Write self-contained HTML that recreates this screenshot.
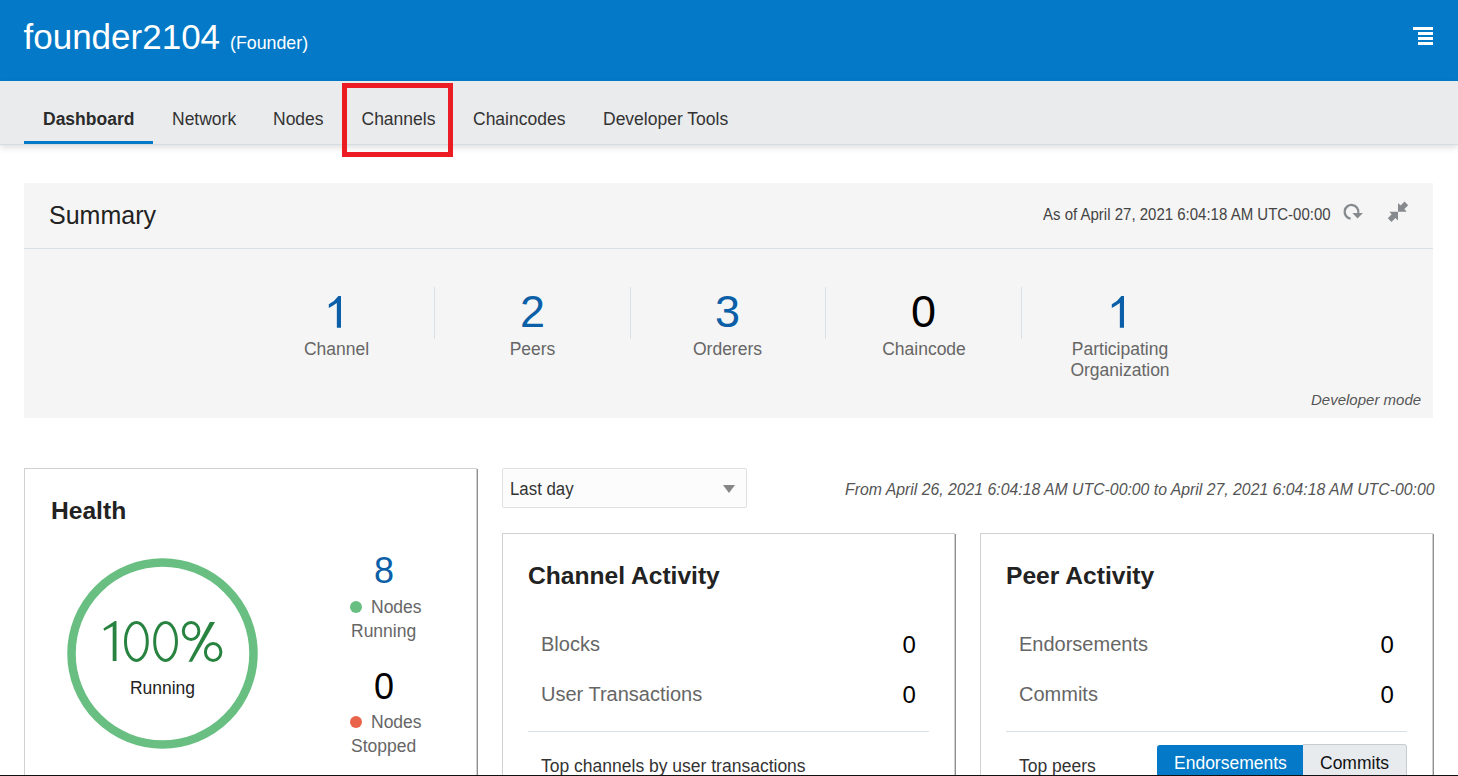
<!DOCTYPE html>
<html>
<head>
<meta charset="utf-8">
<style>
html,body{margin:0;padding:0;}
body{width:1458px;height:776px;overflow:hidden;position:relative;background:#fff;font-family:"Liberation Sans",sans-serif;color:#333;}
.a{position:absolute;white-space:nowrap;}
#hdr{left:0;top:0;width:1458px;height:81px;background:#0379c7;}
#nav{left:0;top:81px;width:1458px;height:63px;background:#eaebed;border-bottom:1px solid #d5dde4;box-shadow:0 3px 6px rgba(0,0,0,0.12);}
.nv{font-size:17.5px;color:#333;top:109px;}
#sum{left:24px;top:183px;width:1409px;height:235px;background:#f5f5f5;}
#sumsep{left:24px;top:248px;width:1409px;height:1px;background:#d9e1e8;}
.col{top:287px;height:52px;width:1px;background:#d9e1e8;}
.num{font-size:45px;color:#0a5fa8;text-align:center;width:195px;}
.lbl{font-size:17.5px;color:#666;text-align:center;width:195px;line-height:21px;}
.card{background:#fff;border:1px solid #d0d0d0;box-shadow:1px 1px 0 #8f8f8f;}
.ct{font-size:24.6px;font-weight:bold;color:#222;}
.rl{font-size:20px;color:#666;}
.rv{font-size:24px;color:#000;}
</style>
</head>
<body>
<!-- header -->
<div id="hdr" class="a"></div>
<div class="a" style="left:23.5px;top:17px;font-size:35px;color:#fff;">founder2104</div>
<div class="a" style="left:230px;top:32.5px;font-size:17.8px;color:#fff;">(Founder)</div>
<svg class="a" style="left:1410px;top:24px" width="26" height="24" viewBox="0 0 26 24">
<rect x="3" y="3" width="20" height="3" fill="#fff"/>
<rect x="8" y="8" width="15" height="3" fill="#fff"/>
<rect x="8" y="13" width="15" height="3" fill="#fff"/>
<rect x="8" y="18" width="15" height="3" fill="#fff"/>
</svg>

<!-- nav -->
<div id="nav" class="a"></div>
<div class="a nv" style="left:43px;font-weight:bold;color:#2b2b2b;">Dashboard</div>
<div class="a" style="left:24px;top:141px;width:129px;height:3px;background:#0379c7;"></div>
<div class="a nv" style="left:172px;">Network</div>
<div class="a nv" style="left:273px;">Nodes</div>
<div class="a nv" style="left:361.5px;">Channels</div>
<div class="a nv" style="left:473px;">Chaincodes</div>
<div class="a nv" style="left:603px;">Developer Tools</div>
<div class="a" style="left:342px;top:83px;width:101px;height:64px;border:5px solid #ec1c24;"></div>

<!-- summary -->
<div id="sum" class="a"></div>
<div id="sumsep" class="a"></div>
<div class="a" style="left:49px;top:201px;font-size:25px;color:#222;">Summary</div>
<div class="a" style="left:1043px;top:206px;font-size:15.8px;color:#444;transform:scaleX(0.9495);transform-origin:0 0;">As of April 27, 2021 6:04:18 AM UTC-00:00</div>
<svg class="a" style="left:1340px;top:200px" width="26" height="24" viewBox="0 0 26 24">
<path d="M10.6 18.6 A6.85 6.85 0 1 1 18.25 13" fill="none" stroke="#868a8e" stroke-width="2.3"/>
<path d="M12.4 13 L22.9 13 L17.5 18.6 Z" fill="#868a8e"/>
</svg>
<svg class="a" style="left:1384px;top:198px" width="28" height="28" viewBox="0 0 28 28">
<path d="M14 13.7 L14 5 L16.6 7.4 L20.5 3.5 L24.2 7.2 L20.3 11.1 L22.7 13.7 Z" fill="#868a8e"/>
<path d="M14 13.7 L14 22.4 L11.4 20 L7.5 23.9 L3.8 20.2 L7.7 16.3 L5.3 13.7 Z" fill="#868a8e"/>
</svg>

<div class="a col" style="left:434px;"></div>
<div class="a col" style="left:630px;"></div>
<div class="a col" style="left:825px;"></div>
<div class="a col" style="left:1021px;"></div>

<svg class="a" style="left:326px;top:294px" width="18" height="36" viewBox="0 0 18 36"><path d="M12.4 2 L15 2 L15 33.7 L10.85 33.7 L10.85 9 Q7 11.8 2.8 13.9 L2.8 10.2 Q9 7 12.4 2 Z" fill="#0a5fa8"/></svg>
<div class="a lbl" style="left:239px;top:339px;">Channel</div>
<div class="a num" style="left:435px;top:286px;">2</div>
<div class="a lbl" style="left:435px;top:339px;">Peers</div>
<div class="a num" style="left:630px;top:286px;">3</div>
<div class="a lbl" style="left:630px;top:339px;">Orderers</div>
<div class="a num" style="left:826px;top:286px;color:#000;">0</div>
<div class="a lbl" style="left:826.5px;top:339px;">Chaincode</div>
<svg class="a" style="left:1109px;top:294px" width="18" height="36" viewBox="0 0 18 36"><path d="M12.4 2 L15 2 L15 33.7 L10.85 33.7 L10.85 9 Q7 11.8 2.8 13.9 L2.8 10.2 Q9 7 12.4 2 Z" fill="#0a5fa8"/></svg>
<div class="a lbl" style="left:1022.5px;top:339px;">Participating<br>Organization</div>
<div class="a" style="left:1311px;top:390.5px;font-size:15px;font-style:italic;color:#555;">Developer mode</div>

<!-- health card -->
<div class="a card" style="left:24px;top:468px;width:451px;height:320px;"></div>
<div class="a ct" style="left:51px;top:496.5px;">Health</div>
<svg class="a" style="left:62px;top:553px" width="201" height="201" viewBox="0 0 201 201">
<circle cx="100.5" cy="100.5" r="91" fill="none" stroke="#68bf81" stroke-width="8.5"/>
</svg>
<svg class="a" style="left:98px;top:612px" width="130" height="56" viewBox="0 0 130 56">
<g fill="none" stroke="#27833f" stroke-width="3">
<ellipse cx="38.4" cy="29.4" rx="10.9" ry="19"/>
<ellipse cx="67.55" cy="29.4" rx="10.9" ry="19"/>
<ellipse cx="93.1" cy="18.95" rx="7.8" ry="8.5"/>
<ellipse cx="115.15" cy="39.9" rx="7.75" ry="8.5"/>
</g>
<path d="M16.9 8.9 L18.5 8.9 L18.5 48.9 L14.7 48.9 L14.7 14.3 L6.2 18.7 L5.4 16.5 Z" fill="#27833f"/>
<path d="M111.9 10 L117 10 L94.1 49.8 L90.5 49.8 Z" fill="#27833f"/>
</svg>
<div class="a" style="left:62px;top:677.5px;width:201px;text-align:center;font-size:17.5px;color:#222;">Running</div>

<div class="a" style="left:334px;top:550px;width:100px;text-align:center;font-size:36px;color:#0a5fa8;">8</div>
<div class="a" style="left:350px;top:601px;width:12px;height:12px;border-radius:50%;background:#68bf81;"></div>
<div class="a" style="left:371px;top:597px;font-size:17.5px;color:#666;">Nodes</div>
<div class="a" style="left:351px;top:621px;font-size:17.5px;color:#666;">Running</div>
<div class="a" style="left:334px;top:666px;width:100px;text-align:center;font-size:36px;color:#000;">0</div>
<div class="a" style="left:350px;top:716px;width:12px;height:12px;border-radius:50%;background:#e9644a;"></div>
<div class="a" style="left:371px;top:712px;font-size:17.5px;color:#666;">Nodes</div>
<div class="a" style="left:351px;top:736px;font-size:17.5px;color:#666;">Stopped</div>

<!-- dropdown + date -->
<div class="a" style="left:502px;top:468px;width:243px;height:38px;border:1px solid #e0e0e0;border-radius:2px;background:#fcfcfc;"></div>
<div class="a" style="left:510px;top:479px;font-size:18px;color:#333;transform:scaleX(0.935);transform-origin:0 0;">Last day</div>
<svg class="a" style="left:723px;top:485px" width="12" height="8" viewBox="0 0 12 8"><path d="M0 0 L12 0 L6 8 Z" fill="#868686"/></svg>
<div class="a" style="left:845px;top:481px;font-size:15.8px;font-style:italic;color:#555;">From April 26, 2021 6:04:18 AM UTC-00:00 to April 27, 2021 6:04:18 AM UTC-00:00</div>

<!-- channel activity -->
<div class="a card" style="left:502px;top:533px;width:451px;height:260px;"></div>
<div class="a ct" style="left:528px;top:561.5px;">Channel Activity</div>
<div class="a rl" style="left:541px;top:633px;">Blocks</div>
<div class="a rv" style="left:902.5px;top:630.5px;">0</div>
<div class="a rl" style="left:541px;top:683px;">User Transactions</div>
<div class="a rv" style="left:902.5px;top:680.5px;">0</div>
<div class="a" style="left:528px;top:731px;width:401px;height:1px;background:#d9e1e8;"></div>
<div class="a" style="left:541px;top:756px;font-size:17.5px;color:#333;">Top channels by user transactions</div>

<!-- peer activity -->
<div class="a card" style="left:980px;top:533px;width:451px;height:260px;"></div>
<div class="a ct" style="left:1006px;top:561.5px;">Peer Activity</div>
<div class="a rl" style="left:1019px;top:633px;">Endorsements</div>
<div class="a rv" style="left:1380.5px;top:630.5px;">0</div>
<div class="a rl" style="left:1019px;top:683px;">Commits</div>
<div class="a rv" style="left:1380.5px;top:680.5px;">0</div>
<div class="a" style="left:1006px;top:731px;width:401px;height:1px;background:#d9e1e8;"></div>
<div class="a" style="left:1019px;top:756px;font-size:17.5px;color:#333;">Top peers</div>
<div class="a" style="left:1157px;top:745px;width:146px;height:40px;background:#0379c7;border-radius:3px 0 0 0;"></div>
<div class="a" style="left:1174px;top:752.5px;font-size:17.5px;color:#fff;">Endorsements</div>
<div class="a" style="left:1303px;top:744px;width:103px;height:40px;background:#e8ebee;border:1px solid #c5ccd2;border-left:none;border-radius:0 3px 0 0;"></div>
<div class="a" style="left:1320px;top:752.5px;font-size:17.5px;color:#111;">Commits</div>

<!-- bottom dark line -->
<div class="a" style="left:0;top:775px;width:1458px;height:1px;background:#111;"></div>
</body>
</html>
